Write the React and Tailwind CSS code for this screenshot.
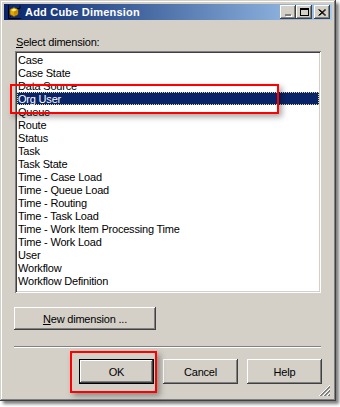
const items = [
  "Case",
  "Case State",
  "Data Source",
  "Org User",
  "Queue",
  "Route",
  "Status",
  "Task",
  "Task State",
  "Time - Case Load",
  "Time - Queue Load",
  "Time - Routing",
  "Time - Task Load",
  "Time - Work Item Processing Time",
  "Time - Work Load",
  "User",
  "Workflow",
  "Workflow Definition",
];

function TitleIcon() {
  return (
    <svg width="16" height="16" viewBox="0 0 16 16" className="shrink-0">
      <path d="M2.5 1 V14.5 H15" stroke="#000" strokeWidth="1" fill="none" />
      <path d="M2.5 14.5 L14 3" stroke="#000" strokeWidth="1" strokeDasharray="1 1" fill="none" />
      <path d="M14 1.5 V4.5 H11" stroke="#000" strokeWidth="1" fill="none" />
      <polygon points="8,3.5 12,5.5 12,10.5 8,12.5 4,10.5 4,5.5" fill="#e0a800" stroke="#8a5a00" strokeWidth="0.7" />
      <polygon points="8,4.5 11,6 8,7.5 5,6" fill="#fff27a" />
      <polygon points="8,7.5 11,6 11,10 8,11.5" fill="#c98a00" />
    </svg>
  );
}

function TitleButton({ children }) {
  return (
    <div className="w-[16px] h-[14px] bg-[#d4d0c8] flex items-center justify-center shadow-[inset_-1px_-1px_0_#404040,inset_1px_1px_0_#ffffff,inset_-2px_-2px_0_#808080,inset_2px_2px_0_#d4d0c8]">
      {children}
    </div>
  );
}

function Button({ children, def, className = "" }) {
  return (
    <div
      className={
        "h-[25px] w-[75px] bg-[#d4d0c8] flex items-center justify-center text-[11px] text-black pt-[2px] " +
        (def
          ? "border border-black shadow-[inset_-1px_-1px_0_#404040,inset_1px_1px_0_#ffffff,inset_-2px_-2px_0_#808080] "
          : "shadow-[inset_-1px_-1px_0_#404040,inset_1px_1px_0_#ffffff,inset_-2px_-2px_0_#808080,inset_2px_2px_0_#d4d0c8] ") +
        className
      }
    >
      {children}
    </div>
  );
}

export default function App() {
  return (
    <div className="relative w-[340px] h-[407px] bg-white overflow-hidden font-['Liberation_Sans',Arial,sans-serif] text-[11px] leading-[13px] tracking-[-0.2px] text-black">
      <div className="w-[336px] h-[401px] bg-[#d4d0c8] p-[4px] flex flex-col shadow-[inset_-1px_-1px_0_#404040,inset_1px_1px_0_#d4d0c8,inset_-2px_-2px_0_#808080,inset_2px_2px_0_#ffffff,3px_3px_3px_rgba(0,0,0,0.5)]">
        {/* Title bar */}
        <div className="h-[18px] bg-gradient-to-r from-[#0a246a] to-[#a6caf0] flex items-center pl-[2px] pr-[2px]">
          <TitleIcon />
          <div className="ml-[3px] text-white font-bold text-[11px] leading-[13px] tracking-[0.2px]">
            Add Cube Dimension
          </div>
          <div className="ml-auto flex items-center">
            <TitleButton>
              <div className="w-[6px] h-[2px] bg-[#808080] mt-[6px] shadow-[1px_1px_0_#ffffff]" />
            </TitleButton>
            <TitleButton>
              <div className="w-[9px] h-[8px] border border-black border-t-2" />
            </TitleButton>
            <div className="w-[2px]" />
            <TitleButton>
              <svg width="8" height="7" viewBox="0 0 8 7">
                <path d="M0.5 0.5 L7 6.5 M1.5 0.5 L8 6.5 M7 0.5 L0.5 6.5 M8 0.5 L1.5 6.5" stroke="#000" strokeWidth="1" />
              </svg>
            </TitleButton>
          </div>
        </div>

        {/* Content */}
        <div className="flex flex-col px-[11px]">
          <div className="mt-[15px] h-[13px] ml-[1px] pt-[1px]">
            <span className="underline underline-offset-[1px]">S</span>elect dimension:
          </div>
          <div className="mt-[3px] h-[242px] bg-white p-[2px] shadow-[inset_1px_1px_0_#808080,inset_-1px_-1px_0_#ffffff,inset_2px_2px_0_#404040,inset_-2px_-2px_0_#d4d0c8]">
            <div className="flex flex-col">
              {items.map((it) =>
                it === "Org User" ? (
                  <div
                    key={it}
                    className="h-[13px] pl-[1px] bg-[#0a246a] text-white outline-1 outline-dotted outline-[#e8d890] -outline-offset-1 whitespace-nowrap"
                  >
                    <span className="relative top-[1px]">{it}</span>
                  </div>
                ) : (
                  <div key={it} className="h-[13px] pl-[1px] whitespace-nowrap">
                    <span className="relative top-[1px]">{it}</span>
                  </div>
                )
              )}
            </div>
          </div>

          <div className="mt-[14px] ml-[-1px] h-[23px] w-[142px] bg-[#d4d0c8] flex items-center justify-center pt-[1px] shadow-[inset_-1px_-1px_0_#404040,inset_1px_1px_0_#ffffff,inset_-2px_-2px_0_#808080,inset_2px_2px_0_#d4d0c8]">
            <span>
              <span className="underline underline-offset-[1px]">N</span>ew dimension ...
            </span>
          </div>

          <div className="mt-[16px] ml-[-1px] w-[307px] h-[2px] border-t border-t-[#808080] border-b border-b-white" />

          <div className="mt-[11px] flex justify-end gap-[9px] mr-[-1px]">
            <Button def>OK</Button>
            <Button>Cancel</Button>
            <Button>Help</Button>
          </div>
        </div>

        {/* Resize grip */}
        <div className="mt-auto flex justify-end">
          <svg width="13" height="13" viewBox="0 0 13 13" className="mr-[1px] mb-[1px]">
            <path d="M12 1 L1 12 M12 5 L5 12 M12 9 L9 12" stroke="#ffffff" strokeWidth="1" />
            <path d="M12 2 L2 12 M12 3 L3 12 M12 6 L6 12 M12 7 L7 12 M12 10 L10 12 M12 11 L11 12" stroke="#808080" strokeWidth="1" />
          </svg>
        </div>
      </div>

      {/* Red highlight boxes */}
      <div className="absolute left-[10px] top-[84px] w-[269px] h-[30px] border-2 border-[#ff0000] shadow-[3px_3px_6px_rgba(0,0,0,0.35)]" />
      <div className="absolute left-[70px] top-[351px] w-[87px] h-[42px] border-2 border-[#ff0000] shadow-[3px_3px_6px_rgba(0,0,0,0.35)]" />
    </div>
  );
}
